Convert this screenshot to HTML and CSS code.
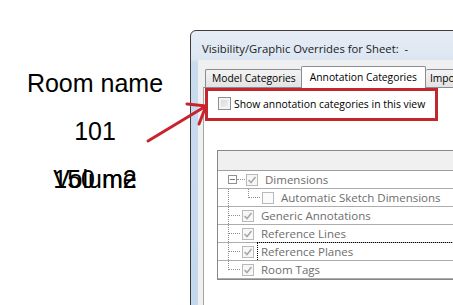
FILE: index.html
```html
<!DOCTYPE html>
<html lang="en">
<head>
    <meta charset="UTF-8">
    <title>Visibility/Graphic Overrides</title>
    <link rel="stylesheet" href="styles.css">
</head>
<body>
    <!-- Etiquette de piece -->
    <div class="room-tag">
        <div class="tag-line">Room name</div>
        <div class="tag-line">101</div>
        <div class="tag-line tag-stack"><span>Volume</span><span>150 m2</span></div>
    </div>

    <!-- Fenetre de dialogue -->
    <div class="dialog">
        <div class="dialog-title">Visibility/Graphic Overrides for Sheet:&nbsp; -</div>
        <div class="dialog-client">
            <div class="tabs">
                <div class="tab tab-first">Model Categories</div>
                <div class="tab active">Annotation Categories</div>
                <div class="tab tab-last">Imported Categories</div>
            </div>
            <div class="tab-panel">
                <div class="callout">
                    <span class="checkbox"></span>
                    <span>Show annotation categories in this view</span>
                </div>

                <div class="grid">
                    <div class="grid-head"></div>

                    <div class="row">
                        <span class="expander"></span>
                        <span class="stub"></span>
                        <span class="check on"></span>
                        <span class="label">Dimensions</span>
                    </div>
                    <div class="row">
                        <span class="pass"></span>
                        <span class="branch last"></span>
                        <span class="check"></span>
                        <span class="label">Automatic Sketch Dimensions</span>
                    </div>
                    <div class="row">
                        <span class="branch"></span>
                        <span class="check on"></span>
                        <span class="label">Generic Annotations</span>
                    </div>
                    <div class="row">
                        <span class="branch"></span>
                        <span class="check on"></span>
                        <span class="label">Reference Lines</span>
                    </div>
                    <div class="row">
                        <span class="branch"></span>
                        <span class="check on"></span>
                        <span class="label focus">Reference Planes</span>
                    </div>
                    <div class="row">
                        <span class="branch last"></span>
                        <span class="check on"></span>
                        <span class="label">Room Tags</span>
                    </div>
                </div>
            </div>
        </div>
    </div>

    <!-- Fleche rouge -->
    <svg class="arrow" width="453" height="305" viewBox="0 0 453 305">
        <g stroke="#c7242d" stroke-width="3" stroke-linecap="round" fill="none">
            <line x1="148" y1="141" x2="206" y2="106"/>
            <line x1="206" y1="106" x2="187" y2="104"/>
            <line x1="206" y1="106" x2="199" y2="124"/>
        </g>
    </svg>
</body>
</html>
```

FILE: styles.css
```css
body {
    margin: 0;
    width: 453px;
    height: 305px;
    overflow: hidden;
    position: relative;
    display: flex;
    background-color: #ffffff;
    font-family: "Open Sans", "Noto Sans", sans-serif;
}

/* Etiquette de piece a gauche */
.room-tag {
    width: 190px;
    flex-shrink: 0;
    padding-top: 59px;
    font-family: "Liberation Sans", Arial, sans-serif;
    font-size: 25px;
    line-height: 48px;
    color: #000;
    text-align: center;
}

.tag-stack {
    display: grid;
    justify-items: center;
}

.tag-stack span {
    grid-area: 1 / 1;
}

/* Dialogue Windows 7 */
.dialog {
    flex-shrink: 0;
    width: 300px;
    height: 290px;
    margin-top: 30px;
    padding-left: 7px;
    border: 1px solid #3d3d3d;
    border-radius: 6px 6px 0 0;
    background: linear-gradient(#e6edf6 0, #dce6f2 28px, #c9dbef 32px, #c3d7ee);
}

.dialog-title {
    height: 29px;
    padding: 6px 0 0 4px;
    box-sizing: border-box;
    font-size: 11.3px;
    line-height: 23px;
    color: #1a1a1a;
    white-space: nowrap;
}

.dialog-client {
    height: 260px;
    padding: 6px 0 0 5px;
    background-color: #f0f0f0;
}

.tabs {
    display: flex;
    align-items: flex-end;
    height: 21px;
    margin-left: 2px;
    font-size: 10.3px;
    white-space: nowrap;
    color: #000;
}

.tab {
    box-sizing: border-box;
    height: 18px;
    line-height: 17px;
    padding: 0 5px 0 6px;
    border: 1px solid #898c95;
    border-bottom: none;
    border-radius: 2px 2px 0 0;
    background: linear-gradient(#f3f3f3, #e3e3e3);
}

.tab.active {
    position: relative;
    z-index: 1;
    height: 22px;
    margin-bottom: -1px;
    padding: 1px 8px 0 8px;
    line-height: 18px;
    background: #ffffff;
}

.tab-first {
    border-right: none;
}

.tab-last {
    padding-left: 4px;
    border-left: none;
    overflow: hidden;
}

.tab-panel {
    height: 240px;
    border-top: 1px solid #898c95;
    border-left: 1px solid #a5a5a5;
    background-color: #ffffff;
}

/* Cadre rouge */
.callout {
    display: flex;
    align-items: center;
    gap: 3px;
    width: 233px;
    height: 33px;
    box-sizing: border-box;
    margin-left: 1px;
    padding: 0 0 2px 10px;
    border: 3px solid #c1272d;
    font-size: 10.4px;
    color: #000;
    white-space: nowrap;
}

.checkbox {
    flex-shrink: 0;
    width: 13px;
    height: 13px;
    box-sizing: border-box;
    border: 1px solid #8e8f8f;
    background: linear-gradient(135deg, #d4d4d4, #f6f6f6);
    box-shadow: inset 0 0 0 2px #f4f4f4;
}

/* Grille des categories */
.grid {
    width: 260px;
    margin: 29px 0 0 13px;
    border: 1px solid #828790;
    border-right: none;
    font-size: 11.5px;
    color: #6d6d6d;
    white-space: nowrap;
}

.grid-head {
    height: 19px;
    border-bottom: 1px solid #a0a0a0;
    background-color: #f0f0f0;
}

.row {
    display: flex;
    align-items: center;
    height: 17px;
    padding-left: 10px;
    border-bottom: 1px solid #adadad;
}

.row:first-of-type {
    padding-left: 6px;
}

.expander {
    flex-shrink: 0;
    width: 9px;
    height: 9px;
    box-sizing: border-box;
    border: 1px solid #919191;
    background: linear-gradient(#777, #777) center / 5px 1px no-repeat, #fff;
}

.stub {
    flex-shrink: 0;
    width: 8px;
    margin-right: 1px;
    border-top: 1px dotted #8f8f8f;
}

.pass {
    flex-shrink: 0;
    align-self: stretch;
    width: 19px;
    border-left: 1px dotted #8f8f8f;
}

.branch {
    flex-shrink: 0;
    align-self: stretch;
    display: flex;
    flex-direction: column;
    width: 11px;
    margin-right: 2px;
    border-left: 1px dotted #8f8f8f;
}

.branch::before {
    content: "";
    height: 8px;
    border-bottom: 1px dotted #8f8f8f;
}

.branch.last {
    width: 12px;
    border-left: none;
}

.branch.last::before {
    border-left: 1px dotted #8f8f8f;
}

.check {
    flex-shrink: 0;
    width: 12px;
    height: 12px;
    box-sizing: border-box;
    border: 1px solid #b9b9b9;
    background: #fbfbfb;
}

.check.on {
    background: url("data:image/svg+xml;utf8,<svg xmlns='http://www.w3.org/2000/svg' width='10' height='10'><path d='M1.5 5 L4 7.5 L8.5 2' stroke='%23a9a9a9' stroke-width='1.6' fill='none'/></svg>") center no-repeat, #f7f7f7;
}

.label {
    align-self: stretch;
    display: flex;
    align-items: center;
    flex: 1;
    margin-left: 3px;
    padding-left: 3px;
    border-left: 1px solid transparent;
}

.label.focus {
    margin-top: -1px;
    border-top: 1px dotted #000;
    border-left: 1px dotted #000;
}

.arrow {
    position: absolute;
    left: 0;
    top: 0;
    pointer-events: none;
}
```
